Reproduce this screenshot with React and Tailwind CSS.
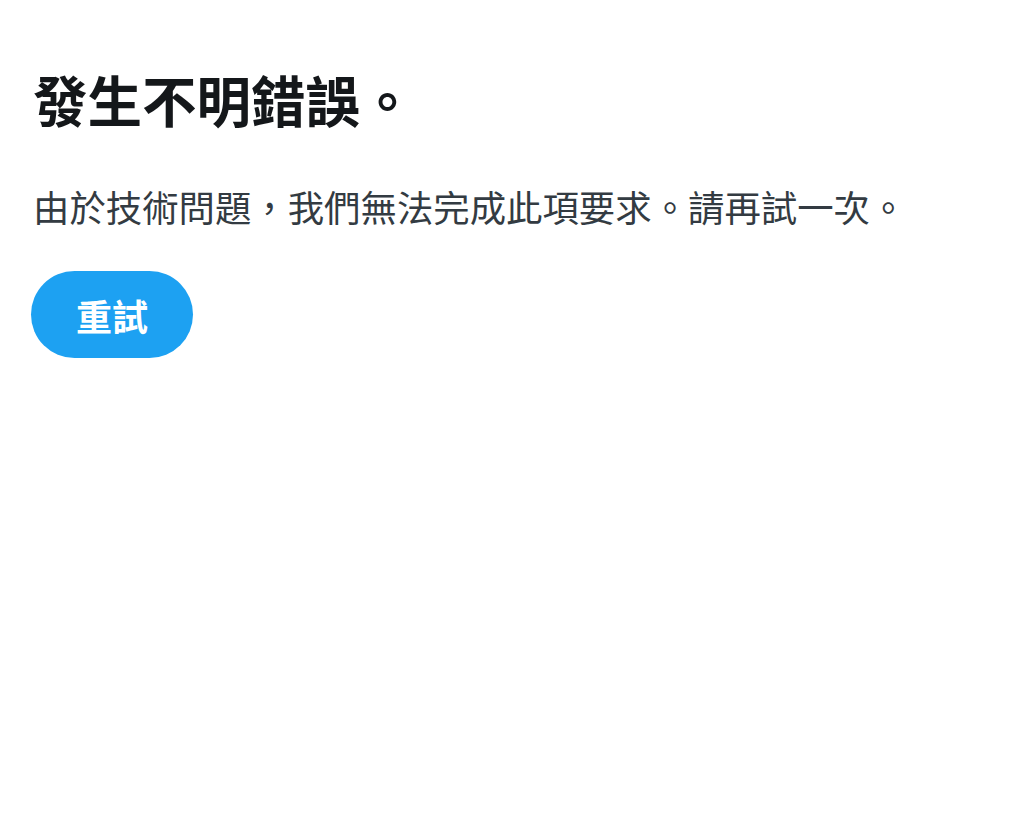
export default function App() {
  return (
    <div
      className="min-h-screen bg-white px-[33px] pt-[60px]"
      style={{ fontFamily: '"Noto Sans CJK TC", "Noto Sans", sans-serif' }}
    >
      <h1 className="text-[54.5px] leading-[78px] font-bold text-[#14171a]">發生不明錯誤。</h1>
      <p className="mt-[41px] text-[36.4px] leading-[54px] text-[#333b42]">
        由於技術問題，我們無法完成此項要求。請再試一次。
      </p>
      <button className="mt-[38px] -ml-[2px] h-[87px] rounded-full bg-[#1da1f2] px-[45px] text-[36px] font-bold text-white">
        重試
      </button>
    </div>
  );
}
